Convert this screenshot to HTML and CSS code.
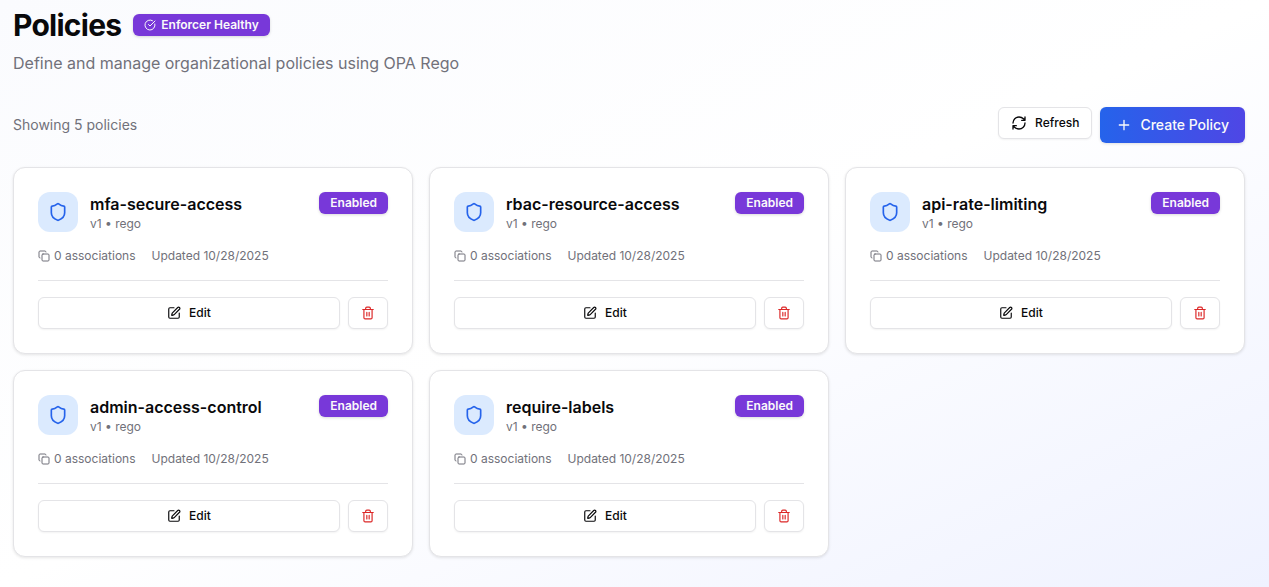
FILE: index.html
```html
<!DOCTYPE html>
<html lang="en">
<head>
<meta charset="utf-8">
<meta name="viewport" content="width=device-width, initial-scale=1">
<title>Policies</title>
<link rel="stylesheet" href="styles.css">
</head>
<body>
<svg class="sprite" aria-hidden="true">
  <symbol id="shield" viewBox="0 0 24 24"><path d="M20 13c0 5-3.500 7.500-7.660 8.950a1 1 0 0 1-.67-.01C7.500 20.500 4 18 4 13V6a1 1 0 0 1 1-1c2 0 4.500-1.200 6.240-2.720a1.170 1.170 0 0 1 1.520 0C14.510 3.810 17 5 19 5a1 1 0 0 1 1 1z"/></symbol>
  <symbol id="copy" viewBox="0 0 24 24"><rect width="14" height="14" x="8" y="8" rx="2"/><path d="M4 16c-1.100 0-2-.9-2-2V4c0-1.100.9-2 2-2h10c1.100 0 2 .9 2 2"/></symbol>
  <symbol id="edit" viewBox="0 0 24 24"><path d="M12 3H5a2 2 0 0 0-2 2v14a2 2 0 0 0 2 2h14a2 2 0 0 0 2-2v-7"/><path d="M18.375 2.625a1 1 0 0 1 3 3l-9.013 9.014a2 2 0 0 1-.853.505l-2.873.84a.5.5 0 0 1-.62-.62l.84-2.873a2 2 0 0 1 .506-.852z"/></symbol>
  <symbol id="trash" viewBox="0 0 24 24"><path d="M3 6h18M19 6v14c0 1-1 2-2 2H7c-1 0-2-1-2-2V6M8 6V4c0-1 1-2 2-2h4c1 0 2 1 2 2v2M10 11v6M14 11v6"/></symbol>
</svg>
<main class="page">
  <header class="page-header">
    <div class="title-row">
      <h1 class="title">Policies</h1>
      <span class="badge status"><svg class="icon icon-xs" viewBox="0 0 24 24"><path d="M21.801 10A10 10 0 1 1 17 3.335"/><path d="m9 11 3 3L22 4"/></svg>Enforcer Healthy</span>
    </div>
    <p class="subtitle">Define and manage organizational policies using OPA Rego</p>
  </header>
  <div class="toolbar">
    <p class="count">Showing 5 policies</p>
    <div class="actions">
      <button class="button" type="button"><svg class="icon icon-md" viewBox="0 0 24 24"><path d="M3 12a9 9 0 0 1 9-9 9.750 9.750 0 0 1 6.740 2.740L21 8M21 3v5h-5M21 12a9 9 0 0 1-9 9 9.750 9.750 0 0 1-6.740-2.740L3 16M8 16H3v5"/></svg>Refresh</button>
      <button class="button primary" type="button"><svg class="icon icon-md" viewBox="0 0 24 24"><path d="M5 12h14M12 5v14"/></svg>Create Policy</button>
    </div>
  </div>
  <section class="grid">
    <article class="card">
      <div class="card-head">
        <span class="tile"><svg class="icon icon-lg"><use href="#shield"/></svg></span>
        <div class="names"><h2 class="name">mfa-secure-access</h2><p class="version">v1 • rego</p></div>
        <span class="badge">Enabled</span>
      </div>
      <div class="meta"><span class="links"><svg class="icon icon-xs"><use href="#copy"/></svg>0 associations</span><span>Updated 10/28/2025</span></div>
      <div class="card-actions">
        <button class="button edit" type="button"><svg class="icon icon-sm"><use href="#edit"/></svg>Edit</button>
        <button class="button delete" type="button" aria-label="Delete"><svg class="icon icon-sm"><use href="#trash"/></svg></button>
      </div>
    </article>
    <article class="card">
      <div class="card-head">
        <span class="tile"><svg class="icon icon-lg"><use href="#shield"/></svg></span>
        <div class="names"><h2 class="name">rbac-resource-access</h2><p class="version">v1 • rego</p></div>
        <span class="badge">Enabled</span>
      </div>
      <div class="meta"><span class="links"><svg class="icon icon-xs"><use href="#copy"/></svg>0 associations</span><span>Updated 10/28/2025</span></div>
      <div class="card-actions">
        <button class="button edit" type="button"><svg class="icon icon-sm"><use href="#edit"/></svg>Edit</button>
        <button class="button delete" type="button" aria-label="Delete"><svg class="icon icon-sm"><use href="#trash"/></svg></button>
      </div>
    </article>
    <article class="card">
      <div class="card-head">
        <span class="tile"><svg class="icon icon-lg"><use href="#shield"/></svg></span>
        <div class="names"><h2 class="name">api-rate-limiting</h2><p class="version">v1 • rego</p></div>
        <span class="badge">Enabled</span>
      </div>
      <div class="meta"><span class="links"><svg class="icon icon-xs"><use href="#copy"/></svg>0 associations</span><span>Updated 10/28/2025</span></div>
      <div class="card-actions">
        <button class="button edit" type="button"><svg class="icon icon-sm"><use href="#edit"/></svg>Edit</button>
        <button class="button delete" type="button" aria-label="Delete"><svg class="icon icon-sm"><use href="#trash"/></svg></button>
      </div>
    </article>
    <article class="card">
      <div class="card-head">
        <span class="tile"><svg class="icon icon-lg"><use href="#shield"/></svg></span>
        <div class="names"><h2 class="name">admin-access-control</h2><p class="version">v1 • rego</p></div>
        <span class="badge">Enabled</span>
      </div>
      <div class="meta"><span class="links"><svg class="icon icon-xs"><use href="#copy"/></svg>0 associations</span><span>Updated 10/28/2025</span></div>
      <div class="card-actions">
        <button class="button edit" type="button"><svg class="icon icon-sm"><use href="#edit"/></svg>Edit</button>
        <button class="button delete" type="button" aria-label="Delete"><svg class="icon icon-sm"><use href="#trash"/></svg></button>
      </div>
    </article>
    <article class="card">
      <div class="card-head">
        <span class="tile"><svg class="icon icon-lg"><use href="#shield"/></svg></span>
        <div class="names"><h2 class="name">require-labels</h2><p class="version">v1 • rego</p></div>
        <span class="badge">Enabled</span>
      </div>
      <div class="meta"><span class="links"><svg class="icon icon-xs"><use href="#copy"/></svg>0 associations</span><span>Updated 10/28/2025</span></div>
      <div class="card-actions">
        <button class="button edit" type="button"><svg class="icon icon-sm"><use href="#edit"/></svg>Edit</button>
        <button class="button delete" type="button" aria-label="Delete"><svg class="icon icon-sm"><use href="#trash"/></svg></button>
      </div>
    </article>
  </section>
</main>
</body>
</html>
```
FILE: styles.css
```css
* { box-sizing: border-box; }

body {
  margin: 0;
  min-height: 100vh;
  font-family: Inter, "Liberation Sans", sans-serif;
  color: #09090b;
  background: linear-gradient(to bottom right, #fafbfe, #ffffff 50%, #eff2ff);
}

h1, h2, p { margin: 0; }

.sprite { display: none; }

.icon {
  flex: none;
  fill: none;
  stroke: currentColor;
  stroke-width: 2;
  stroke-linecap: round;
  stroke-linejoin: round;
}
.icon-xs { width: 12px; height: 12px; }
.icon-sm { width: 14px; height: 14px; }
.icon-md { width: 16px; height: 16px; }
.icon-lg { width: 20px; height: 20px; }

.page { padding: 7px 24px 24px 13px; }

.title-row { display: flex; align-items: center; gap: 12px; }
.title { font-size: 30px; line-height: 36px; font-weight: 700; letter-spacing: -0.025em; }
.subtitle { margin-top: 8px; font-size: 16px; line-height: 24px; color: #71717a; }

.badge {
  display: inline-flex;
  align-items: center;
  padding: 3px 11px;
  border-radius: 6px;
  font-size: 12px;
  line-height: 16px;
  font-weight: 600;
  color: #fafafa;
  background: #7838d9;
  box-shadow: 0 1px 3px rgb(0 0 0 / 15%);
}
.status { gap: 5px; }

.toolbar {
  display: flex;
  align-items: center;
  justify-content: space-between;
  margin: 32px 0 24px;
}
.count { font-size: 14px; line-height: 20px; color: #71717a; }
.actions { display: flex; align-items: flex-start; gap: 8px; }

.button {
  display: inline-flex;
  align-items: center;
  justify-content: center;
  gap: 8px;
  height: 32px;
  padding: 0 12px;
  border: 1px solid #e4e4e7;
  border-radius: 6px;
  font: 500 12px/16px Inter, "Liberation Sans", sans-serif;
  color: #09090b;
  background: #ffffff;
  box-shadow: 0 1px 2px rgb(0 0 0 / 5%);
}
.primary {
  height: 36px;
  padding: 0 16px;
  border: 0;
  font-size: 14px;
  line-height: 20px;
  color: #fafafa;
  background: linear-gradient(to right, #2563eb, #4f46e5);
  box-shadow: 0 1px 3px rgb(0 0 0 / 12%);
}

.grid {
  display: grid;
  grid-template-columns: repeat(3, minmax(0, 1fr));
  gap: 16px;
}
.card {
  padding: 24px;
  border: 1px solid #e4e4e7;
  border-radius: 12px;
  background: #ffffff;
  box-shadow: 0 1px 3px rgb(0 0 0 / 10%);
}
.card-head { display: flex; align-items: flex-start; gap: 12px; }
.tile {
  display: grid;
  place-items: center;
  width: 40px;
  height: 40px;
  border-radius: 12px;
  color: #2563eb;
  background: #dbeafe;
}
.names { flex: 1; min-width: 0; }
.name { font-size: 16px; line-height: 24px; font-weight: 600; }
.version { font-size: 12px; line-height: 16px; color: #71717a; }
.meta {
  display: flex;
  gap: 16px;
  margin: 16px 0;
  font-size: 12px;
  line-height: 16px;
  color: #71717a;
}
.links { display: flex; align-items: center; gap: 4px; }
.card-actions {
  display: flex;
  gap: 8px;
  padding-top: 16px;
  border-top: 1px solid #e4e4e7;
}
.edit { flex: 1; }
.delete { width: 40px; padding: 0; color: #dc2626; }
```
